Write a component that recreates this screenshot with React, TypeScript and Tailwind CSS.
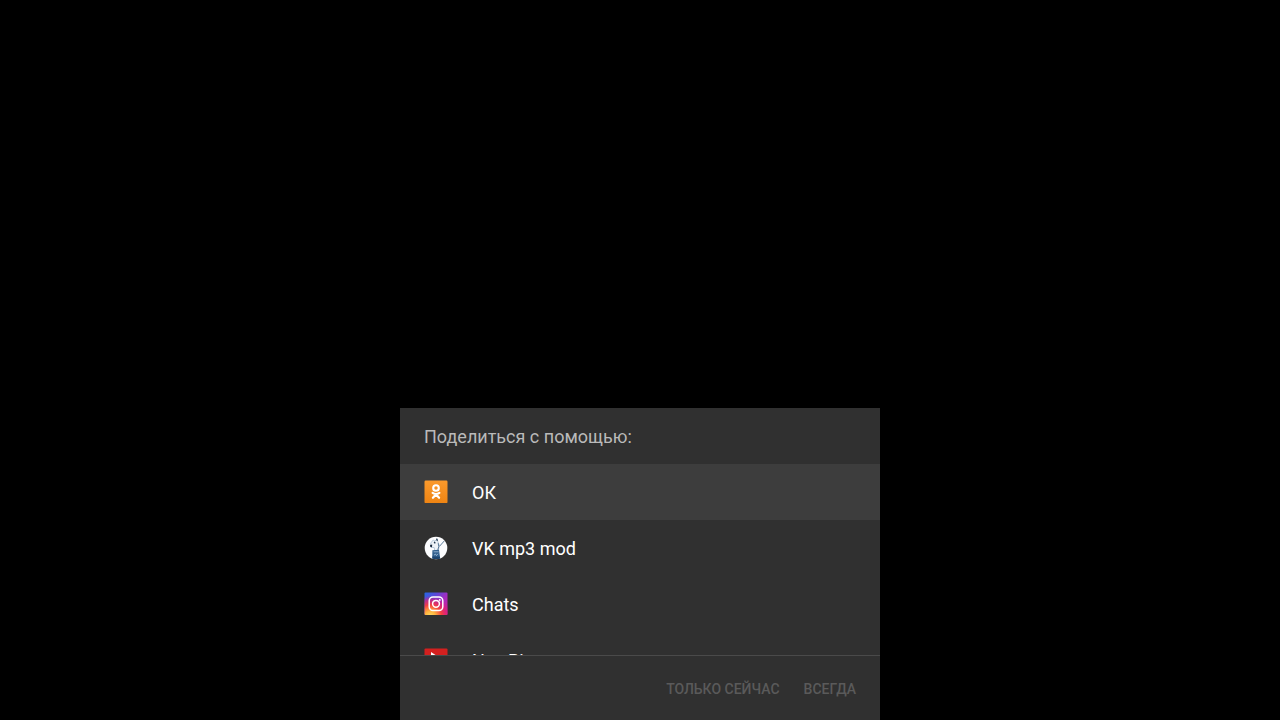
import React, {useState} from "react";

function OkIcon() {
    return (
        <svg viewBox="0 0 24 24" className="size-6 shrink-0" aria-hidden="true">
            <defs>
                <linearGradient id="ok-bg" x1="0" y1="0" x2="0" y2="1">
                    <stop offset="0" stopColor="#fb9a2c"/>
                    <stop offset="1" stopColor="#ee8413"/>
                </linearGradient>
            </defs>
            <rect x="0.5" y="0.5" width="23" height="22.6" rx="1.2" fill="url(#ok-bg)"/>
            <circle cx="12" cy="8" r="2.8" fill="none" stroke="#fff" strokeWidth="2.1"/>
            <path d="M8.6 12.8Q12 15.2 15.4 12.8M12 14.4L8.9 17.8M12 14.4L15.1 17.8"
                  fill="none" stroke="#fff" strokeWidth="2.2" strokeLinecap="round"/>
        </svg>
    )
}

function VkModIcon() {
    return (
        <svg viewBox="0 0 24 24" className="size-6 shrink-0" aria-hidden="true">
            <circle cx="12" cy="12" r="11.3" fill="#fcfdff"/>
            <path d="M7.4 6.2L9.4 3.8L10.6 5.2L13.2 3.2L14 6L15.4 9.6L14.2 14.6L10.8 14.8L10.2 11.6L6.8 11.2L6.4 8.4Z"
                  fill="#eef3f8" stroke="#8fa9c2" strokeWidth="0.6"/>
            <path d="M6 9L8.2 8.6L8 11.2L6.4 11Z" fill="#18283c"/>
            <path d="M10.2 5.8L11.2 7.4M12.6 2.6L13.4 4.8" stroke="#21384f" strokeWidth="1.3"/>
            <path d="M14.2 7.2Q15.6 10.6 13.8 13.8" fill="none" stroke="#4c6e90" strokeWidth="0.9"/>
            <path d="M20.2 5L15.6 10.2" stroke="#4c6e90" strokeWidth="0.9"/>
            <path d="M8.4 14.2L15 13.8L16.2 22.4Q12 23.8 8.2 22.4Z" fill="#315f8d"/>
            <path d="M9.6 15.8H14.6M10 19.2L11.4 18L12.4 19.6L14 17.8" fill="none" stroke="#a8c4de" strokeWidth="0.8"/>
            <path d="M8.4 20.6L8.4 22.4Q12 23.8 16.2 22.4L15.8 20.8Z" fill="#1e456f"/>
        </svg>
    )
}

function InstagramIcon() {
    return (
        <svg viewBox="0 0 24 24" className="size-6 shrink-0" aria-hidden="true">
            <defs>
                <linearGradient id="ig-top" x1="0" y1="0" x2="1" y2="0.8">
                    <stop offset="0" stopColor="#2468e4"/>
                    <stop offset="0.35" stopColor="#5b48d8"/>
                    <stop offset="0.65" stopColor="#a32cc0"/>
                    <stop offset="1" stopColor="#d3219b"/>
                </linearGradient>
                <radialGradient id="ig-glow" cx="0.25" cy="1.05" r="0.9">
                    <stop offset="0" stopColor="#ffdc66"/>
                    <stop offset="0.25" stopColor="#ffb43e"/>
                    <stop offset="0.55" stopColor="#f5413f"/>
                    <stop offset="0.8" stopColor="#e02070" stopOpacity="0.7"/>
                    <stop offset="1" stopColor="#d01d90" stopOpacity="0"/>
                </radialGradient>
            </defs>
            <rect x="0.5" y="0.5" width="23" height="22.6" rx="1" fill="url(#ig-top)"/>
            <rect x="0.5" y="0.5" width="23" height="22.6" rx="1" fill="url(#ig-glow)"/>
            <rect x="5.2" y="5" width="13.6" height="13.6" rx="3.8" fill="none" stroke="#fff" strokeWidth="1.5"/>
            <circle cx="12" cy="11.8" r="3.4" fill="none" stroke="#fff" strokeWidth="1.5"/>
            <circle cx="15.8" cy="8" r="0.9" fill="#fff"/>
        </svg>
    )
}

function NewPipeIcon() {
    return (
        <svg viewBox="0 0 24 24" className="size-6 shrink-0" aria-hidden="true">
            <rect x="0.5" y="0.5" width="23" height="23" rx="1" fill="#d3201f"/>
            <path d="M7 4L19 12L7 20Z" fill="#fff"/>
        </svg>
    )
}

const apps = [
    {id: "ok", name: "ОК", icon: <OkIcon/>},
    {id: "vk", name: "VK mp3 mod", icon: <VkModIcon/>},
    {id: "chats", name: "Chats", icon: <InstagramIcon/>},
    {id: "newpipe", name: "NewPipe", icon: <NewPipeIcon/>},
]

export default function App() {

    const [focused, setFocused] = useState("ok")

    return (
        <div className="flex min-h-screen items-end justify-center bg-black font-['Roboto',sans-serif]">
            <section aria-labelledby="share-title" className="w-full max-w-[480px] bg-[#303030]">
                <h1 id="share-title" className="flex h-14 items-center px-6 pt-0.5 text-lg text-[#bababa]">
                    Поделиться с помощью:
                </h1>

                <ul className="max-h-[191px] overflow-y-auto [scrollbar-width:none]">
                    {apps.map((app) => (
                        <li key={app.id}>
                            <button
                                type="button"
                                onClick={() => setFocused(app.id)}
                                className={`flex h-14 w-full items-center gap-6 px-6 text-left text-lg text-white ${focused === app.id ? "bg-[#3d3d3d]" : ""}`}
                            >
                                {app.icon}
                                <span className="pt-0.5">{app.name}</span>
                            </button>
                        </li>
                    ))}
                </ul>

                <div className="flex h-[65px] items-center justify-end gap-6 border-t border-[#4a4a4a] px-6 pt-0.5 text-sm font-medium text-[#5a5a5a]">
                    <button type="button" disabled>ТОЛЬКО СЕЙЧАС</button>
                    <button type="button" disabled>ВСЕГДА</button>
                </div>
            </section>
        </div>
    )
}
